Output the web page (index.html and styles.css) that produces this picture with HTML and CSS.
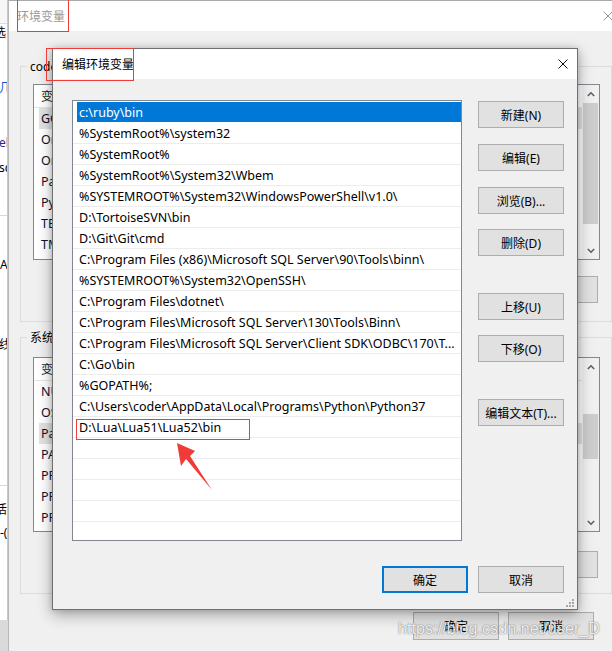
FILE: index.html
```html
<!DOCTYPE html>
<html lang="zh">
<head>
<meta charset="utf-8">
<link rel="stylesheet" href="styles.css">
</head>
<body>
<div class="farwin">
  <div class="fw-top"></div>
  <div class="fw-t fw1"><span class="cut6">选</span></div>
  <div class="fw-t fw2 blue"><span class="cut1">几</span></div>
  <div class="fw-t fw3 link"><span class="cut1">el</span></div>
  <div class="fw-t fw4"><span class="cut1">sc</span></div>
  <div class="fw-sep fw5"></div>
  <div class="fw-t fw6"><span>A</span></div>
  <div class="fw-t fw7"><span class="cut1">线</span></div>
  <div class="fw-sep fw8"></div>
  <div class="fw-t fw9"><span class="cut5">活</span></div>
  <div class="fw-t fw10"><span>-(</span></div>
</div>

<div class="envwin">
  <div class="env-title">
    <span class="env-title-text">环境变量</span>
    <svg class="close-x" width="10" height="10" viewBox="0 0 10 10"><path d="M0.5 0.5 L9.5 9.5 M9.5 0.5 L0.5 9.5" stroke="#9a9a9a" stroke-width="1" fill="none"/></svg>
  </div>
  <div class="env-body">
    <div class="group g1">
      <div class="legend">coder 的用户变量(U)</div>
      <div class="vlist vl1">
        <div class="vlist-main">
          <div class="vhead"><span class="vh-c1">变量</span><span>值</span></div>
          <div class="vrow isel">GOPATH</div>
          <div class="vrow">OneDrive</div>
          <div class="vrow">OneDriveConsumer</div>
          <div class="vrow">Path</div>
          <div class="vrow">PyCharm</div>
          <div class="vrow">TEMP</div>
          <div class="vrow">TMP</div>
        </div>
        <div class="sbar sb1">
          <div class="sb-arrow"><svg width="8" height="6" viewBox="0 0 8 6"><polyline points="0.8,5 4,1.8 7.2,5" fill="none" stroke="#606060" stroke-width="1.6"/></svg></div>
          <div class="sb-track"><div class="sb-thumb"></div></div>
          <div class="sb-arrow"><svg width="8" height="6" viewBox="0 0 8 6"><polyline points="0.8,1 4,4.2 7.2,1" fill="none" stroke="#606060" stroke-width="1.6"/></svg></div>
        </div>
      </div>
      <div class="grp-btns">
        <div class="btn">新建(N)...</div>
        <div class="btn">编辑(E)...</div>
        <div class="btn">删除(D)</div>
      </div>
    </div>

    <div class="group g2">
      <div class="legend">系统变量(S)</div>
      <div class="vlist vl2">
        <div class="vlist-main">
          <div class="vhead"><span class="vh-c1">变量</span><span>值</span></div>
          <div class="vrow">NUMBER_OF_PROCESSORS</div>
          <div class="vrow">OS</div>
          <div class="vrow isel">Path</div>
          <div class="vrow">PATHEXT</div>
          <div class="vrow">PROCESSOR_ARCHITECTURE</div>
          <div class="vrow">PROCESSOR_IDENTIFIER</div>
          <div class="vrow">PROCESSOR_LEVEL</div>
        </div>
        <div class="sbar sb2">
          <div class="sb-arrow"><svg width="8" height="6" viewBox="0 0 8 6"><polyline points="0.8,5 4,1.8 7.2,5" fill="none" stroke="#606060" stroke-width="1.6"/></svg></div>
          <div class="sb-track"><div class="sb-thumb"></div></div>
          <div class="sb-arrow"><svg width="8" height="6" viewBox="0 0 8 6"><polyline points="0.8,1 4,4.2 7.2,1" fill="none" stroke="#606060" stroke-width="1.6"/></svg></div>
        </div>
      </div>
      <div class="grp-btns">
        <div class="btn">新建(W)...</div>
        <div class="btn">编辑(I)...</div>
        <div class="btn">删除(L)</div>
      </div>
    </div>

    <div class="env-footer">
      <div class="btn">确定</div>
      <div class="btn">取消</div>
    </div>
  </div>
</div>

<div class="dialog">
  <div class="dlg-title">
    <span class="dlg-title-text">编辑环境变量</span>
    <svg class="close-x" width="10" height="10" viewBox="0 0 10 10"><path d="M0.5 0.5 L9.5 9.5 M9.5 0.5 L0.5 9.5" stroke="#111" stroke-width="1" fill="none"/></svg>
  </div>
  <div class="dlg-body">
    <div class="plist">
      <div class="prow sel">c:\ruby\bin</div>
      <div class="prow">%SystemRoot%\system32</div>
      <div class="prow">%SystemRoot%</div>
      <div class="prow">%SystemRoot%\System32\Wbem</div>
      <div class="prow">%SYSTEMROOT%\System32\WindowsPowerShell\v1.0\</div>
      <div class="prow">D:\TortoiseSVN\bin</div>
      <div class="prow">D:\Git\Git\cmd</div>
      <div class="prow">C:\Program Files (x86)\Microsoft SQL Server\90\Tools\binn\</div>
      <div class="prow">%SYSTEMROOT%\System32\OpenSSH\</div>
      <div class="prow">C:\Program Files\dotnet\</div>
      <div class="prow">C:\Program Files\Microsoft SQL Server\130\Tools\Binn\</div>
      <div class="prow">C:\Program Files\Microsoft SQL Server\Client SDK\ODBC\170\T...</div>
      <div class="prow">C:\Go\bin</div>
      <div class="prow">%GOPATH%;</div>
      <div class="prow">C:\Users\coder\AppData\Local\Programs\Python\Python37</div>
      <div class="prow">D:\Lua\Lua51\Lua52\bin</div>
      <div class="prow"></div>
      <div class="prow"></div>
      <div class="prow"></div>
      <div class="prow"></div>
      <div class="prow"></div>
      <div class="prow"></div>
    </div>
    <div class="side-btns">
      <div class="btn b-new">新建(N)</div>
      <div class="btn b-edit">编辑(E)</div>
      <div class="btn b-browse">浏览(B)...</div>
      <div class="btn b-del">删除(D)</div>
      <div class="btn b-up">上移(U)</div>
      <div class="btn b-down">下移(O)</div>
      <div class="btn b-text">编辑文本(T)...</div>
    </div>
    <div class="dlg-footer">
      <div class="btn default">确定</div>
      <div class="btn">取消</div>
    </div>
  </div>
  <svg class="grip" width="9" height="9" viewBox="0 0 9 9">
    <rect x="6" y="0" width="2" height="2" fill="#a8a8a8"/>
    <rect x="3" y="3" width="2" height="2" fill="#a8a8a8"/>
    <rect x="6" y="3" width="2" height="2" fill="#a8a8a8"/>
    <rect x="0" y="6" width="2" height="2" fill="#a8a8a8"/>
    <rect x="3" y="6" width="2" height="2" fill="#a8a8a8"/>
    <rect x="6" y="6" width="2" height="2" fill="#a8a8a8"/>
  </svg>
</div>

<div class="redbox rb-env"></div>
<div class="redbox rb-dlg"></div>
<div class="redbox rb-lua"></div>
<svg class="arrow" width="50" height="56" viewBox="0 0 50 56">
  <polygon points="7,5 25,13 20,18 42,52 16,21 11,28" fill="#f03c38"/>
</svg>
<div class="watermark">https://blog.csdn.net/user_D</div>
</body>
</html>
```

FILE: styles.css
```css
* { box-sizing: border-box; }
html, body { margin: 0; padding: 0; }
body {
  width: 612px;
  height: 651px;
  overflow: hidden;
  position: relative;
  background: #dadada;
  font-family: "Noto Sans", "Noto Sans CJK SC", sans-serif;
  font-size: 12px;
  color: #000;
}

/* far-left window sliver */
.farwin {
  position: absolute;
  left: 0;
  top: 0;
  width: 8px;
  height: 620px;
  background: #fff;
  border-right: 1px solid #c8c8c8;
  overflow: hidden;
  display: flex;
  flex-direction: column;
}
.fw-top { height: 24px; flex: none; background: #f7f7f7; border-bottom: 1px solid #dcdcdc; }
.fw-t { height: 14px; line-height: 14px; white-space: nowrap; flex: none; font-size: 12px; }
.fw-t span { display: inline-block; }
.fw-sep { height: 1px; flex: none; background: #d8d8d8; }
.cut1 { margin-left: -1px; }
.cut5 { margin-left: -5px; }
.cut6 { margin-left: -6px; }
.blue { color: #0b55c4; }
.link { color: #1b2a8f; text-decoration: underline; }
.fw1 { margin-top: 2px; }
.fw2 { margin-top: 41px; }
.fw3 { margin-top: 41px; }
.fw4 { margin-top: 11px; }
.fw5 { margin-top: 40px; }
.fw6 { margin-top: 42px; }
.fw7 { margin-top: 66px; }
.fw8 { margin-top: 133px; }
.fw9 { margin-top: 17px; }
.fw10 { margin-top: 9px; }

/* back window */
.envwin {
  position: absolute;
  left: 8px;
  top: 0;
  width: 616px;
  height: 660px;
  background: #f0f0f0;
  border-top: 1px solid #aaaaaa;
  border-left: 1px solid #b8b8b8;
}
.env-title {
  height: 30px;
  background: #fff;
  display: flex;
  align-items: center;
  justify-content: space-between;
  padding: 0 11px 0 8px;
  color: #9a9a9a;
}
.env-body { padding: 0 12px 0 11px; }
.group {
  border: 1px solid #dcdcdc;
}
.g1 { margin-top: 35px; padding-bottom: 18px; }
.g2 { margin-top: 15px; padding-bottom: 15px; }
.legend {
  width: max-content;
  margin: -8px 0 0 6px;
  padding: 0 3px;
  height: 16px;
  line-height: 16px;
  background: #f0f0f0;
}
.vlist {
  display: flex;
  border: 1px solid #828790;
  background: #fff;
  margin: 0 11px 0 12px;
  overflow: hidden;
}
.vl1 { margin-top: 9px; height: 176px; }
.vl2 { margin-top: 11px; height: 175px; }
.vlist-main { flex: 1; overflow: hidden; }
.vhead {
  height: 23px;
  display: flex;
  align-items: center;
  padding-left: 7px;
  border-bottom: 1px solid #e5e5e5;
  color: #1e1e1e;
}
.vh-c1 { width: 140px; }
.vrow {
  height: 21px;
  line-height: 21px;
  margin-left: 5px;
  padding-left: 2px;
  color: #101030;
  white-space: nowrap;
  font-size: 12.5px;
}
.vrow.isel { background: #e2e2e2; }
.sbar {
  width: 17px;
  flex: none;
  background: #f0f0f0;
  display: flex;
  flex-direction: column;
}
.sb-arrow {
  height: 17px;
  flex: none;
  display: flex;
  align-items: center;
  justify-content: center;
}
.sb-track { flex: 1; }
.sb-thumb { margin: 0 1px; background: #cdcdcd; }
.sb1 .sb-thumb { margin-top: 1px; height: 121px; }
.sb2 .sb-thumb { margin-top: 39px; height: 45px; }

.btn {
  height: 27px;
  width: 86px;
  border: 1px solid #adadad;
  background: #e1e1e1;
  display: flex;
  align-items: center;
  justify-content: center;
  white-space: nowrap;
  color: #000;
}
.grp-btns {
  display: flex;
  justify-content: flex-end;
  gap: 10px;
  margin-right: 13px;
}
.g1 .grp-btns { margin-top: 16px; }
.g2 .grp-btns { margin-top: 19px; }
.env-footer {
  display: flex;
  justify-content: flex-end;
  gap: 9px;
  margin-top: 18px;
  padding-right: 18px;
}
.env-footer .btn { height: 28px; }

/* edit dialog */
.dialog {
  position: absolute;
  left: 52px;
  top: 48px;
  width: 526px;
  height: 562px;
  background: #f0f0f0;
  border: 1px solid #707070;
  box-shadow: 0 5px 14px rgba(0, 0, 0, 0.32), 0 0 6px rgba(0, 0, 0, 0.15);
}
.dlg-title {
  height: 30px;
  background: #fff;
  display: flex;
  align-items: center;
  justify-content: space-between;
  padding: 0 9px;
}
.dlg-body {
  display: grid;
  grid-template-columns: 390px 86px;
  column-gap: 16px;
  padding: 21px 13px 0 19px;
}
.plist {
  height: 441px;
  border: 1px solid #828790;
  background: #fff;
  padding-top: 1px;
  overflow: hidden;
}
.prow {
  height: 21px;
  line-height: 22px;
  font-size: 12.5px;
  border-bottom: 1px solid #ececec;
  padding-left: 6px;
  white-space: nowrap;
  overflow: hidden;
}
.prow.sel {
  background: linear-gradient(to right, #fff 4px, #0078d7 4px);
  color: #fff;
  border-bottom-color: #fff;
}
.side-btns { display: flex; flex-direction: column; }
.b-new { margin-top: 1px; }
.b-edit { margin-top: 16px; }
.b-browse { margin-top: 16px; }
.b-del { margin-top: 15px; }
.b-up { margin-top: 37px; }
.b-down { margin-top: 15px; }
.b-text { margin-top: 37px; }
.dlg-footer {
  grid-column: 1 / 3;
  display: flex;
  justify-content: flex-end;
  gap: 10px;
  margin-top: 25px;
}
.btn.default { border: 2px solid #0078d7; }
.grip { position: absolute; right: 2px; bottom: 1px; }

/* annotations */
.redbox { position: absolute; border: 1px solid #f03c38; }
.rb-env { left: 17px; top: -1px; width: 52px; height: 33px; }
.rb-dlg { left: 46px; top: 48px; width: 88px; height: 33px; }
.rb-lua { left: 76px; top: 419px; width: 174px; height: 21px; }
.arrow { position: absolute; left: 170px; top: 438px; }
.watermark {
  position: absolute;
  left: 398px;
  top: 620px;
  font-family: "Liberation Sans", Arial, sans-serif;
  font-size: 16px;
  line-height: 18px;
  letter-spacing: 0.1px;
  color: rgba(255, 255, 255, 0.9);
  text-shadow: 0 0 1px rgba(0, 0, 0, 0.5), 0 0 2px rgba(0, 0, 0, 0.25);
  white-space: nowrap;
}
```
